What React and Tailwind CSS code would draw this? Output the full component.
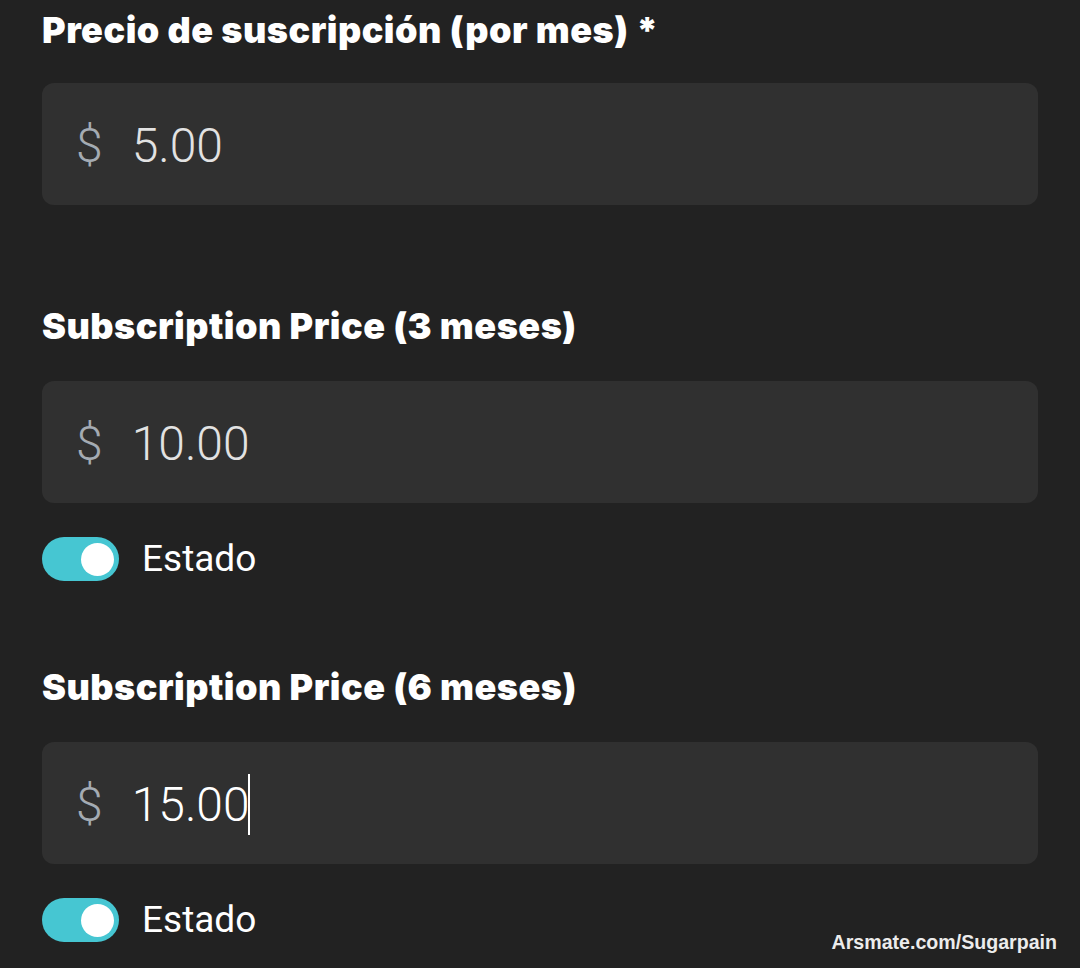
import React from "react";

const font = { fontFamily: "Roboto, 'Noto Sans', sans-serif" };

function Title({ children, className = "" }) {
  return (
    <h2
      className={"text-[36px] leading-[44px] font-black tracking-[0.5px] text-white " + className}
      style={{ fontFamily: "Inter, Roboto, sans-serif" }}
    >
      {children}
    </h2>
  );
}

function PriceInput({ value, active = false, className = "" }) {
  return (
    <div className={"h-[122px] w-full rounded-[12px] bg-[#303030] flex items-center pl-[34px] pt-[3px] " + className}>
      <span className="text-[48px] font-light text-[#a4abb3] leading-none">$</span>
      <span className={"ml-[29px] text-[48px] font-light leading-none " + (active ? "text-white" : "text-[#e2e2e2]")}>
        {value}
      </span>
      {active && <span className="ml-[-2px] w-[2px] h-[61px] bg-white" />}
    </div>
  );
}

function Toggle({ className = "" }) {
  return (
    <div className={"flex items-center " + className}>
      <div className="w-[77px] h-[44px] rounded-full bg-[#46c6d2] flex items-center justify-end pr-[5px]">
        <div className="w-[33px] h-[33px] rounded-full bg-white" />
      </div>
      <span className="ml-[23px] text-[37px] leading-[44px] text-white font-normal">Estado</span>
    </div>
  );
}

export default function App() {
  return (
    <div className="relative w-[1080px] h-[968px] bg-[#222222] overflow-hidden" style={font}>
      <div className="px-[42px] pt-[8px] flex flex-col">
        <Title>Precio de suscripción (por mes) *</Title>
        <PriceInput value="5.00" className="mt-[31px]" />
        <Title className="mt-[99px]">Subscription Price (3 meses)</Title>
        <PriceInput value="10.00" className="mt-[33px]" />
        <Toggle className="mt-[34px]" />
        <Title className="mt-[84px]">Subscription Price (6 meses)</Title>
        <PriceInput value="15.00" active className="mt-[33px]" />
        <Toggle className="mt-[34px]" />
      </div>
      <div
        className="absolute right-[23px] bottom-[11px] text-[19.6px] font-bold text-[#ececec]"
        style={{ fontFamily: "'Liberation Sans', Arial, sans-serif" }}
      >
        Arsmate.com/Sugarpain
      </div>
    </div>
  );
}
